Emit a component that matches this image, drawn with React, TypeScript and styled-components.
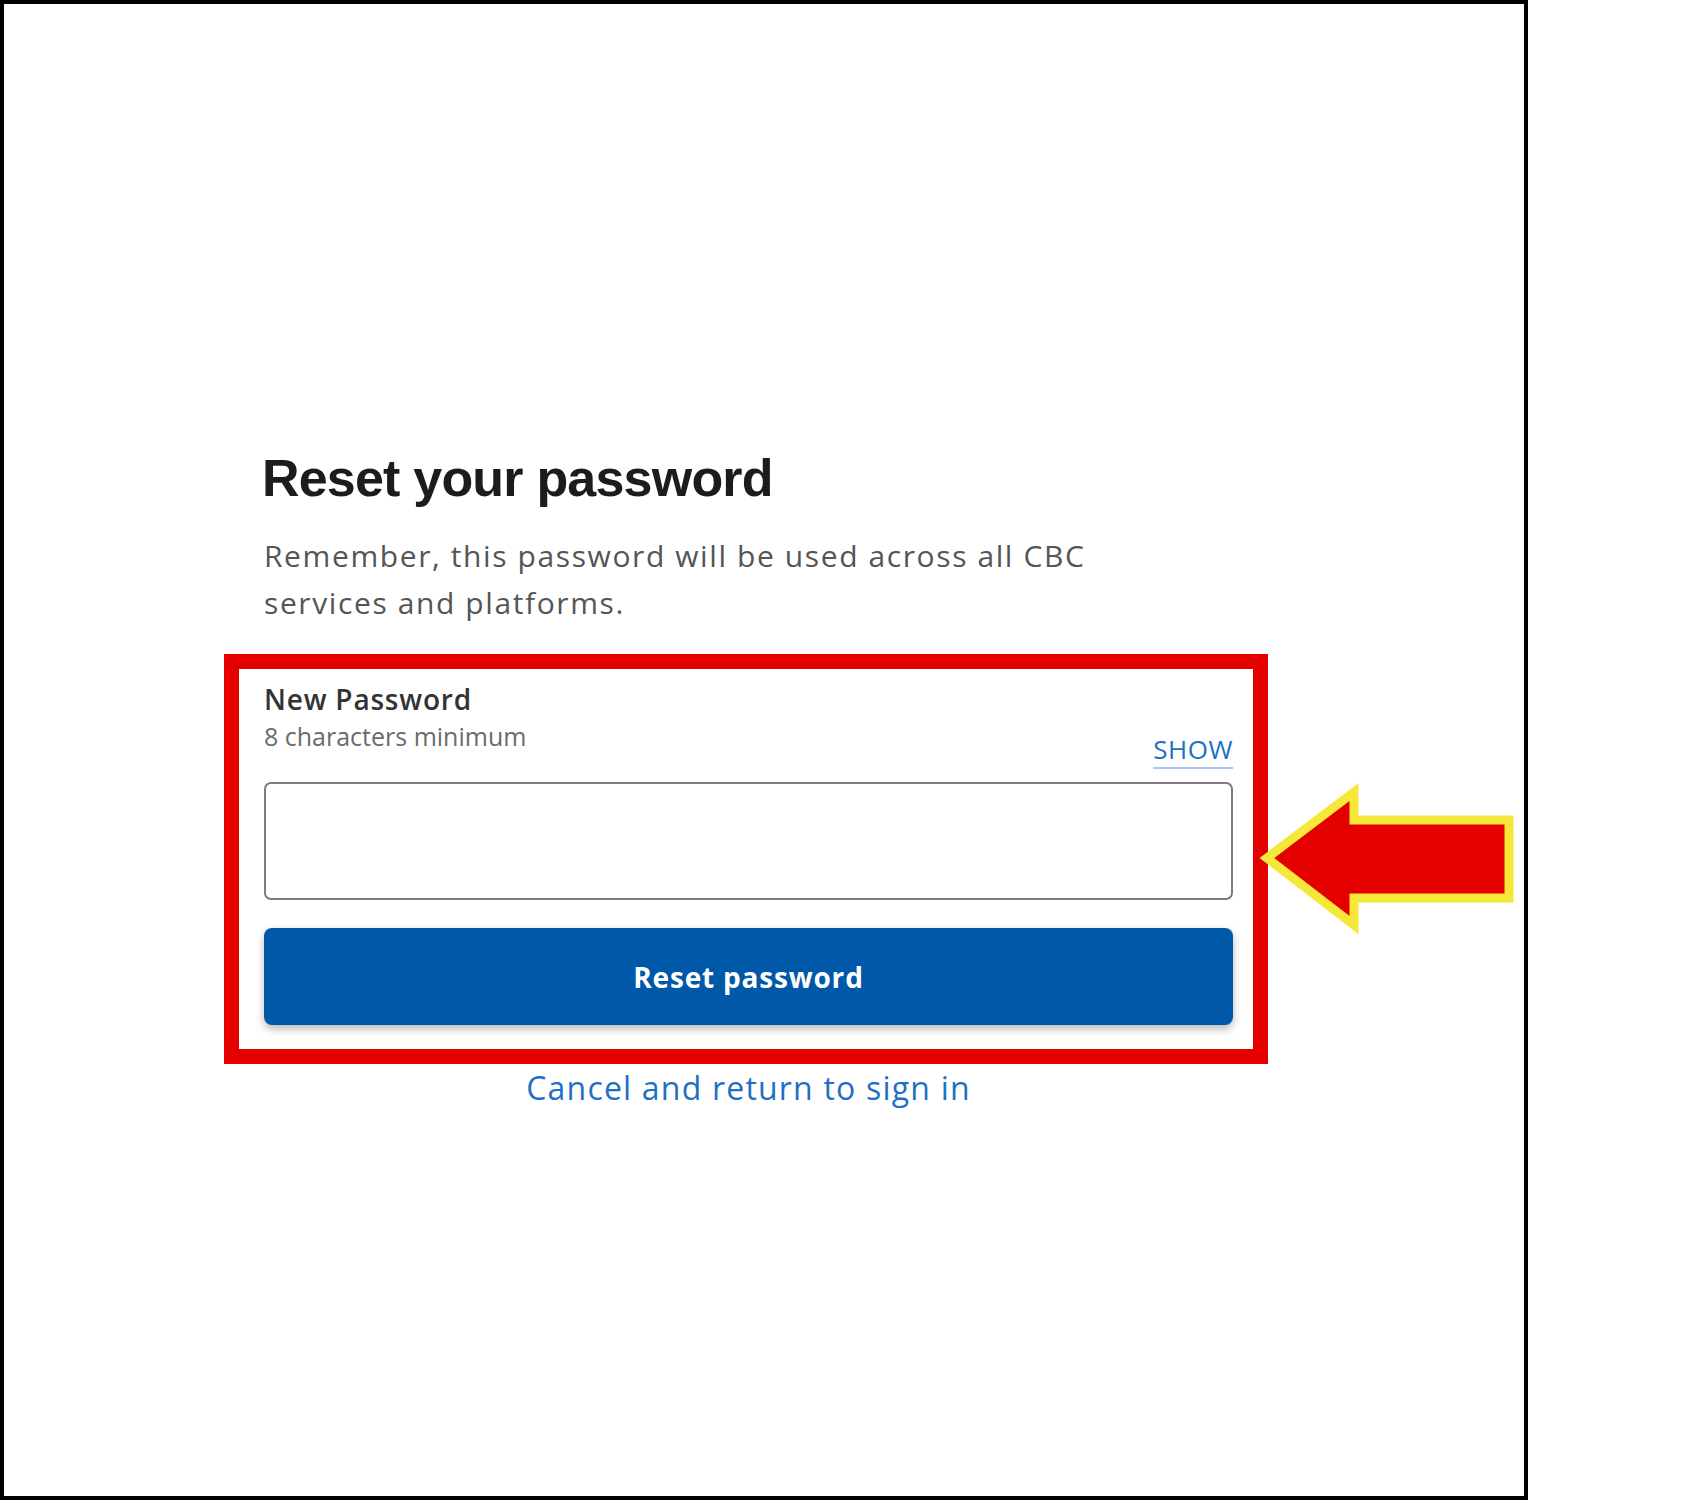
import React from 'react';
import styled, { createGlobalStyle } from 'styled-components';

const GlobalStyle = createGlobalStyle`
  html, body {
    margin: 0;
    padding: 0;
    background: #fff;
  }
  body {
    font-family: 'Open Sans', 'Noto Sans', sans-serif;
  }
`;

const Frame = styled.div`
  box-sizing: border-box;
  width: 1528px;
  height: 1500px;
  border: 4px solid #000;
  padding: 447px 0 0 220px;
`;

const Column = styled.div`
  width: 1044px;
  display: flex;
  flex-direction: column;
`;

const Title = styled.h1`
  margin: 0 0 0 38px;
  font-family: 'Liberation Sans', Arial, sans-serif;
  font-weight: 700;
  font-size: 52px;
  line-height: 55px;
  letter-spacing: -0.8px;
  color: #1c1c1c;
`;

const Intro = styled.p`
  margin: 26px 0 0 40px;
  max-width: 900px;
  font-size: 30px;
  line-height: 47px;
  letter-spacing: 1.6px;
  color: #555;
`;

const Highlight = styled.div`
  position: relative;
  margin-top: 28px;
  border: 15px solid #e50000;
  padding: 13px 20px 24px 25px;
  display: flex;
  flex-direction: column;
`;

const LabelRow = styled.div`
  display: flex;
  justify-content: space-between;
`;

const LabelBlock = styled.div`
  display: flex;
  flex-direction: column;
  gap: 5px;
  padding-bottom: 18px;
`;

const Label = styled.label`
  font-size: 28px;
  line-height: 34px;
  font-weight: 600;
  letter-spacing: 0.8px;
  color: #333;
`;

const Hint = styled.span`
  font-size: 25px;
  line-height: 30px;
  color: #6b6b6b;
`;

const ShowToggle = styled.button`
  align-self: flex-end;
  background: none;
  border: none;
  border-bottom: 2px solid #a9c9ec;
  padding: 0 0 3px;
  font-family: 'Open Sans', sans-serif;
  font-size: 26px;
  line-height: 30px;
  font-weight: 500;
  letter-spacing: 0.5px;
  color: #1f6fc2;
  cursor: pointer;
`;

const PasswordInput = styled.input`
  box-sizing: border-box;
  margin-top: 13px;
  width: 100%;
  height: 118px;
  border: 2px solid #7c7c7c;
  border-radius: 7px;
  background: #fff;
  font-size: 28px;
  padding: 0 20px;
`;

const SubmitButton = styled.button`
  margin-top: 28px;
  height: 97px;
  width: 100%;
  border: none;
  border-radius: 8px;
  background: #0058a8;
  box-shadow: 0 4px 9px rgba(0, 0, 0, 0.28);
  color: #fff;
  font-family: 'Open Sans', sans-serif;
  font-size: 28px;
  font-weight: 700;
  letter-spacing: 0.8px;
  cursor: pointer;
`;

const Pointer = styled.svg`
  position: absolute;
  left: 1011px;
  top: 106px;
  width: 275px;
  height: 165px;
  overflow: visible;
`;

const CancelLink = styled.a`
  margin: 3px 0 0 40px;
  width: 969px;
  text-align: center;
  font-size: 32px;
  line-height: 42px;
  letter-spacing: 1.2px;
  color: #1f70c4;
  text-decoration: none;
`;

const App: React.FC = () => {
  return (
    <>
      <GlobalStyle />
      <Frame>
        <Column>
          <Title>Reset your password</Title>
          <Intro>
            Remember, this password will be used across all CBC services and platforms.
          </Intro>
          <Highlight>
            <LabelRow>
              <LabelBlock>
                <Label htmlFor="new-password">New Password</Label>
                <Hint>8 characters minimum</Hint>
              </LabelBlock>
              <ShowToggle type="button">SHOW</ShowToggle>
            </LabelRow>
            <PasswordInput id="new-password" type="password" />
            <SubmitButton type="button">Reset password</SubmitButton>
            <Pointer viewBox="0 0 275 165">
              <polygon
                points="17,83 104,17 104,45 259,45 259,123 104,123 104,150"
                fill="#e50000"
                stroke="#f6e838"
                strokeWidth="9"
                strokeLinejoin="miter"
                strokeMiterlimit="10"
              />
            </Pointer>
          </Highlight>
          <CancelLink href="#">Cancel and return to sign in</CancelLink>
        </Column>
      </Frame>
    </>
  );
};

export default App;
